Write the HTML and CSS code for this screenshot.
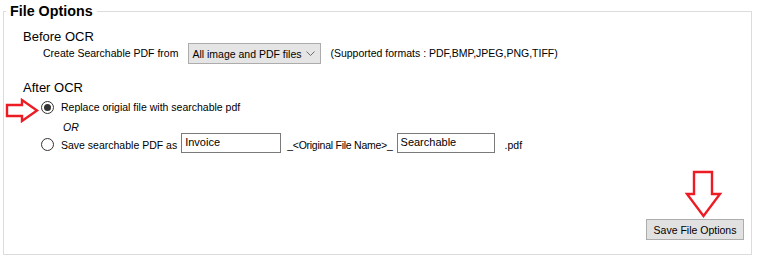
FILE: index.html
```html
<!DOCTYPE html>
<html>
<head>
<meta charset="utf-8">
<link rel="stylesheet" href="styles.css">
</head>
<body>
<div class="page">
  <fieldset class="group">
    <legend class="group-title">File Options</legend>
    <section class="block before">
      <div class="block-title">Before OCR</div>
      <div class="row from-row">
        <span class="lbl create">Create Searchable PDF from</span>
        <div class="select">
          <span class="select-text">All image and PDF files</span>
          <svg class="chevron" width="9" height="5" viewBox="0 0 9 5"><polyline points="0.5,0.5 4.5,4.5 8.5,0.5" fill="none" stroke="#6d6d6d" stroke-width="1"/></svg>
        </div>
        <span class="lbl formats">(Supported formats : PDF,BMP,JPEG,PNG,TIFF)</span>
      </div>
    </section>
    <section class="block after">
      <div class="block-title">After OCR</div>
      <label class="row radio-row first">
        <span class="radio checked"></span>
        <span class="lbl">Replace origial file with searchable pdf</span>
      </label>
      <div class="or">OR</div>
      <div class="row radio-row second">
        <span class="radio"></span>
        <span class="lbl save-as">Save searchable PDF as</span>
        <span class="textbox prefix">Invoice</span>
        <span class="lbl orig">_&lt;Original File Name&gt;_</span>
        <span class="textbox suffix">Searchable</span>
        <span class="lbl ext">.pdf</span>
      </div>
    </section>
    <div class="actions">
      <button class="btn">Save File Options</button>
    </div>
  </fieldset>
  <svg class="arrow arrow-right" width="36" height="26" viewBox="0 0 36 26">
    <polygon points="2,7 17,7 17,2 32,12.5 17,23 17,18 2,18" fill="#fff" stroke="#ed1c24" stroke-width="2.4" stroke-linejoin="miter"/>
  </svg>
  <svg class="arrow arrow-down" width="38" height="49" viewBox="0 0 38 49">
    <polygon points="9,2 27,2 27,24 35,24 18.5,46 2,24 9,24" fill="#fff" stroke="#ed1c24" stroke-width="2.4" stroke-linejoin="miter"/>
  </svg>
</div>
</body>
</html>
```
FILE: styles.css
```css
html, body {
  margin: 0;
  padding: 0;
  background: #fff;
}
body {
  font-family: "Liberation Sans", Arial, sans-serif;
  color: #000;
  width: 757px;
  height: 261px;
  overflow: hidden;
}
.page {
  position: relative;
  width: 757px;
  height: 261px;
}
.group {
  box-sizing: border-box;
  margin: 3px 5px 0 3px;
  padding: 0 0 14px 0;
  border: 1px solid #dcdcdc;
  min-width: 0;
}
.group-title {
  margin-left: 2px;
  padding: 0 4px;
  font-weight: bold;
  font-size: 14.3px;
  line-height: 16px;
}
.block-title {
  font-size: 13px;
  line-height: 15px;
  padding-left: 19px;
}
.before {
  margin-top: 10px;
}
.row {
  display: flex;
}
.lbl {
  font-size: 10.5px;
  line-height: 13px;
  white-space: nowrap;
}
.from-row {
  margin-top: -1px;
  padding-left: 39px;
  align-items: center;
  height: 21px;
}
.create {
  margin-right: 10px;
}
.select {
  box-sizing: border-box;
  width: 133px;
  height: 21px;
  background: #e5e5e5;
  border: 1px solid #acacac;
  display: flex;
  align-items: center;
  padding: 0 0 0 3px;
}
.select-text {
  font-size: 10.5px;
  flex: 1;
  white-space: nowrap;
}
.chevron {
  margin-right: 5px;
}
.formats {
  margin-left: 9px;
}
.after {
  margin-top: 16px;
}
.radio-row {
  padding-left: 37px;
  align-items: center;
}
.radio {
  box-sizing: border-box;
  width: 13px;
  height: 13px;
  border: 1px solid #333;
  border-radius: 50%;
  background: #fff;
  display: flex;
  align-items: center;
  justify-content: center;
  margin-right: 7px;
  flex: none;
}
.radio.checked::after {
  content: "";
  width: 7px;
  height: 7px;
  border-radius: 50%;
  background: #333;
}
.first {
  margin-top: 4px;
  height: 16px;
}
.or {
  font-size: 10.5px;
  font-style: italic;
  line-height: 12px;
  margin-top: 6px;
  padding-left: 59px;
}
.second {
  margin-top: 0;
  height: 20px;
  align-items: flex-end;
}
.second .radio {
  margin-bottom: 2px;
}
.second .lbl {
  margin-bottom: 1px;
}
.save-as {
  margin-right: 4px;
}
.textbox {
  box-sizing: border-box;
  height: 20px;
  border: 1px solid #7a7a7a;
  background: #fff;
  font-size: 11px;
  line-height: 15px;
  padding: 1px 3px 0 3px;
  align-self: flex-start;
}
.prefix {
  width: 100px;
}
.orig {
  margin-left: 6px;
  margin-right: 4px;
  letter-spacing: -0.25px;
}
.suffix {
  width: 98px;
}
.ext {
  margin-left: 10px;
}
.actions {
  display: flex;
  justify-content: flex-end;
  padding-right: 7px;
  margin-top: 66px;
}
.btn {
  box-sizing: border-box;
  width: 98px;
  height: 21px;
  background: #e1e1e1;
  border: 1px solid #adadad;
  border-radius: 0;
  font-family: "Liberation Sans", Arial, sans-serif;
  font-size: 10.5px;
  color: #000;
  padding: 0;
}
.arrow {
  position: absolute;
  overflow: visible;
}
.arrow-right {
  left: 5px;
  top: 95px;
}
.arrow-down {
  left: 685px;
  top: 167px;
}
```
